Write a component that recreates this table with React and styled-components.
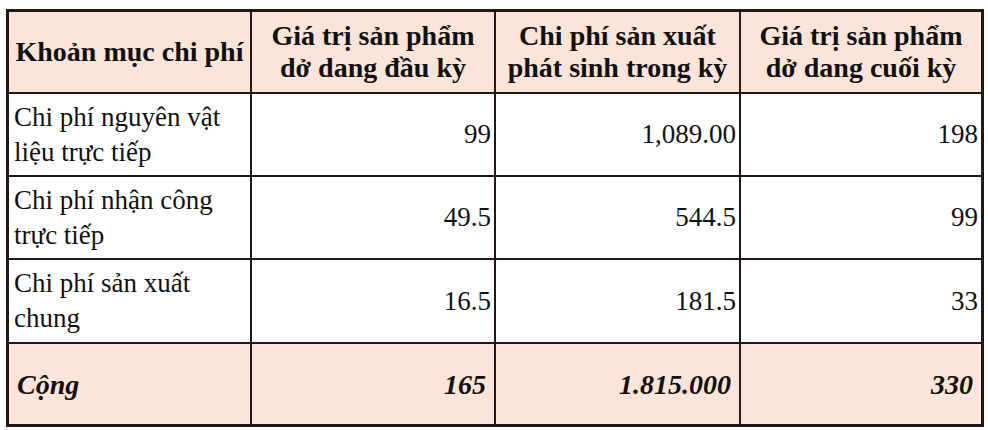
import React from "react";
import styled, { createGlobalStyle } from "styled-components";

const Global = createGlobalStyle`
  html, body { margin: 0; padding: 0; background: #ffffff; }
  body { font-family: "Liberation Serif", "Times New Roman", serif; }
`;

const Page = styled.div`
  padding: 9px 4px 3px 6px;
`;

const Grid = styled.div`
  box-sizing: border-box;
  width: 978px;
  display: grid;
  grid-template-columns: 241px 242px 243px 240px;
  grid-template-rows: 80px 81px 81px 82px 80px;
  gap: 2px;
  background: #231815;
  border: 3px solid #231815;
  font-family: "Liberation Serif", "Times New Roman", serif;
  color: #111;
`;

const Cell = styled.div`
  display: flex;
  align-items: center;
  justify-content: ${(p) => (p.$align === "right" ? "flex-end" : "flex-start")};
  background: ${(p) => (p.$shaded ? "#fce4d8" : "#ffffff")};
  padding: 0 ${(p) => (p.$total ? 8 : 3)}px 0 ${(p) => (p.$total ? 8 : 5)}px;
  font-size: ${(p) => (p.$total ? 28 : 27)}px;
  line-height: 35px;
  font-weight: ${(p) => (p.$total ? 700 : 400)};
  font-style: ${(p) => (p.$total ? "italic" : "normal")};
  white-space: nowrap;
`;

const HeadCell = styled.div`
  display: flex;
  align-items: center;
  justify-content: center;
  text-align: center;
  background: #fce4d8;
  padding: 0 2px;
  font-size: 28px;
  line-height: 32px;
  font-weight: 700;
  white-space: nowrap;
`;

const Lines = styled.span`
  display: block;
`;

const headers = [
  ["Khoản mục chi phí"],
  ["Giá trị sản phẩm", "dở dang đầu kỳ"],
  ["Chi phí sản xuất", "phát sinh trong kỳ"],
  ["Giá trị sản phẩm", "dở dang cuối kỳ"],
];

const rows = [
  { label: ["Chi phí nguyên vật", "liệu trực tiếp"], values: ["99", "1,089.00", "198"] },
  { label: ["Chi phí nhận công", "trực tiếp"], values: ["49.5", "544.5", "99"] },
  { label: ["Chi phí sản xuất", "chung"], values: ["16.5", "181.5", "33"] },
];

const totals = ["165", "1.815.000", "330"];

const MultiLine = ({ lines }) => (
  <Lines>
    {lines.map((l, j) => (
      <React.Fragment key={j}>
        {j > 0 && <br />}
        {l}
      </React.Fragment>
    ))}
  </Lines>
);

export default function App() {
  return (
    <>
      <Global />
      <Page>
        <Grid>
          {headers.map((lines, i) => (
            <HeadCell key={`h${i}`}>
              <MultiLine lines={lines} />
            </HeadCell>
          ))}
          {rows.map((r, i) => (
            <React.Fragment key={`r${i}`}>
              <Cell>
                <MultiLine lines={r.label} />
              </Cell>
              {r.values.map((v, j) => (
                <Cell key={j} $align="right">
                  {v}
                </Cell>
              ))}
            </React.Fragment>
          ))}
          <Cell $total $shaded>Cộng</Cell>
          {totals.map((v, j) => (
            <Cell key={`t${j}`} $total $shaded $align="right">
              {v}
            </Cell>
          ))}
        </Grid>
      </Page>
    </>
  );
}
